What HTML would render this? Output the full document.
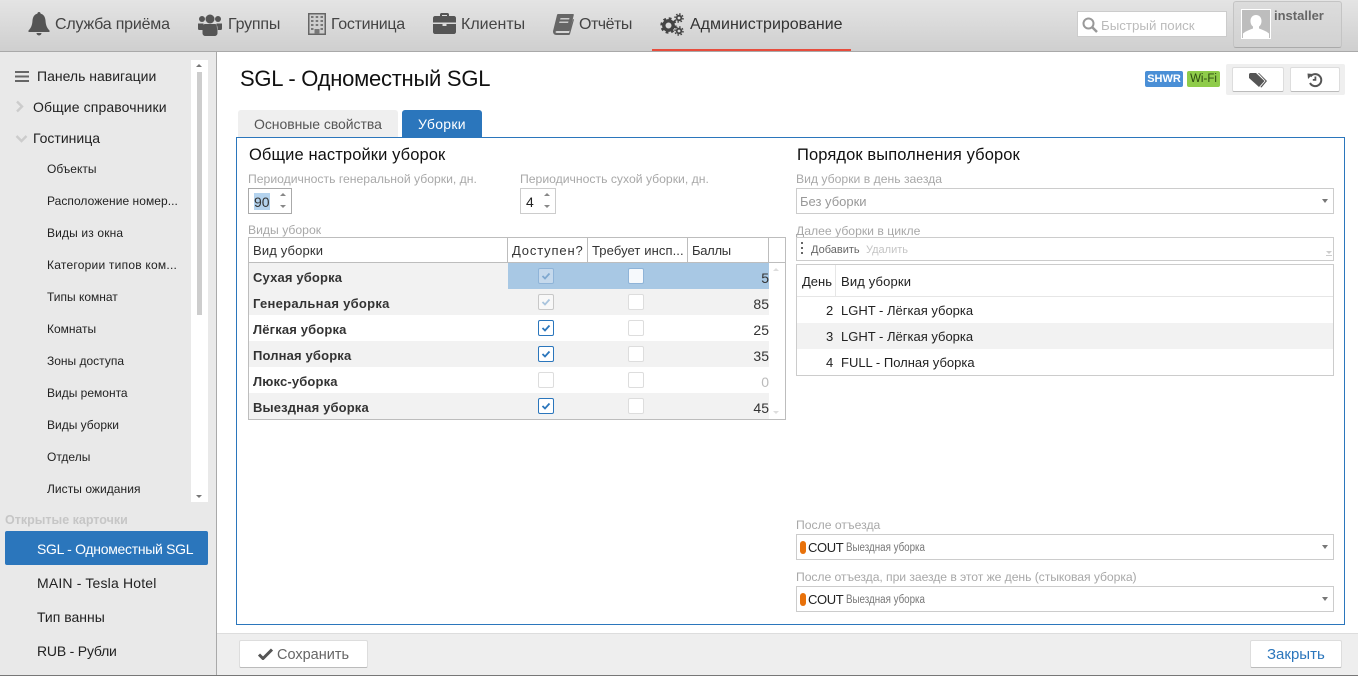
<!DOCTYPE html>
<html lang="ru"><head><meta charset="utf-8"><title>SGL</title>
<style>
*{box-sizing:border-box}
html,body{margin:0;padding:0;width:1358px;height:676px;overflow:hidden;background:#fff;font-family:"Liberation Sans","DejaVu Sans",sans-serif;color:#222}
.b{position:absolute}
.t{position:absolute;white-space:nowrap;line-height:20px;height:20px}
.n{font-size:16px;color:#444}
.s{font-size:14px;color:#222}
.m{font-size:12px;color:#222}
.l{font-size:12.200px;color:#a8a8a8}
.r{font-size:13px;font-weight:bold;color:#333;letter-spacing:.15px}
.num{font-size:14px;color:#333;text-align:right}
.sel{background:#fff;border:1px solid #ccc}
.arr{position:absolute;width:0;height:0;border-left:3.500px solid transparent;border-right:3.500px solid transparent;border-top:4px solid #777}
.up{position:absolute;width:0;height:0;border-left:3.500px solid transparent;border-right:3.500px solid transparent;border-bottom:3px solid #888}
.dn{position:absolute;width:0;height:0;border-left:3.500px solid transparent;border-right:3.500px solid transparent;border-top:3px solid #888}
.cb{position:absolute;width:16px;height:16px;background:#fff;border:1px solid #ddd;border-radius:2px}
.cb svg{position:absolute;left:2px;top:2px}
.btn{position:absolute;background:#fff;border:1px solid #ddd;border-bottom:1px solid #bbb;border-radius:2px}
svg{position:absolute;display:block}
.sub{font-size:11.500px;color:#777;transform:scaleX(.85);transform-origin:0 50%}
</style></head><body>

<!-- top bar -->
<div class="b" style="left:0;top:0;width:1358px;height:52px;background:linear-gradient(#e4e4e4,#cfcfcf);border-bottom:1px solid #a9a9a9"></div>
<div class="b" style="left:652px;top:49px;width:199px;height:2px;background:#e74c3c"></div>

<svg style="left:28px;top:12px" width="22" height="24" viewBox="0 0 22 24"><path fill="#555" d="M11 0c-1 0-1.600.7-1.600 1.600C6.300 2.400 4.800 5 4.500 8.500 4.200 12.500 3.500 15.500.5 18.500v1.500h21v-1.500c-3-3-3.700-6-4-10C17.200 5 15.700 2.400 12.600 1.600 12.600.7 12 0 11 0zM8.500 21a2.500 2.500 0 0 0 5 0z"/></svg>
<div class="t n" style="left:55px;top:15px;letter-spacing:-.2px">Служба приёма</div>

<svg style="left:198px;top:13px" width="24" height="23" viewBox="0 0 24 23"><g fill="#555"><circle cx="4" cy="6" r="3"/><circle cx="20" cy="6" r="3"/><circle cx="12" cy="6" r="4.500"/><path d="M0 10.500h5.500L4.800 17H1.500C0 17 0 16 0 15zM24 10.500h-5.500l.7 6.500h3.300c1.500 0 1.500-1 1.500-2zM7 11h10c1.500 0 2.500 1.500 2.500 4v5c0 2-1.500 3-3 3h-9c-1.500 0-3-1-3-3v-5c0-2.500 1-4 2.500-4z"/></g></svg>
<div class="t n" style="left:228px;top:15px;letter-spacing:-.2px">Группы</div>

<svg style="left:308px;top:13px" width="18" height="22" viewBox="0 0 18 22"><rect width="18" height="22" fill="#666"/><rect x="1.500" y="1.500" width="15" height="19" fill="#cfcfcf"/><g fill="#777"><rect x="3" y="3" width="2.500" height="2"/><rect x="7.700" y="3" width="2.500" height="2"/><rect x="12.500" y="3" width="2.500" height="2"/><rect x="3" y="7" width="2.500" height="2"/><rect x="7.700" y="7" width="2.500" height="2"/><rect x="12.500" y="7" width="2.500" height="2"/><rect x="3" y="11" width="2.500" height="2"/><rect x="7.700" y="11" width="2.500" height="2"/><rect x="12.500" y="11" width="2.500" height="2"/><rect x="3" y="15" width="2.500" height="2"/><rect x="12.500" y="15" width="2.500" height="2"/><rect x="6.500" y="16" width="5" height="5"/></g></svg>
<div class="t n" style="left:331px;top:15px;letter-spacing:-.3px">Гостиница</div>

<svg style="left:433px;top:13px" width="23" height="21" viewBox="0 0 23 21"><path fill="#555" d="M7 3V1.500C7 .7 7.700 0 8.500 0h6c.8 0 1.500.7 1.500 1.500V3h5c1.100 0 2 .9 2 2v4.500H0V5c0-1.100.9-2 2-2zm2 0h5V2H9zM0 11h9.500v2h4v-2H23v8c0 1.100-.9 2-2 2H2c-1.100 0-2-.9-2-2z"/></svg>
<div class="t n" style="left:461px;top:15px">Клиенты</div>

<svg style="left:553px;top:14px" width="21" height="21" viewBox="0 0 21 21"><path fill="#666" d="M5 0h15c.6 0 1 .4.800 1L17 16c-.3.800-.8 1-1.500 1H4c-1 0-1.500.5-1.500 1s.5 1 1.500 1h12l4-14 1 .5L17 20c-.2.600-.6 1-1.300 1H3.500C1 21 0 19.300 0 17.500c0-.6.100-1 .3-1.500L4 1C4.200.4 4.500 0 5 0z"/><path fill="#ccc" d="M7.500 4h9l-.4 1.500h-9zM6.500 7.500h9L15.100 9h-9z"/></svg>
<div class="t n" style="left:579px;top:15px;letter-spacing:-.5px">Отчёты</div>

<svg style="left:660px;top:13px" width="24" height="23" viewBox="0 0 24 23"><g fill="none" stroke="#444"><circle cx="8.500" cy="12.500" r="4.700" stroke-width="3.400"/><circle cx="8.500" cy="12.500" r="7" stroke-width="2.400" stroke-dasharray="2.750 2.750"/><circle cx="19" cy="5" r="2.300" stroke-width="1.800"/><circle cx="19" cy="5" r="4" stroke-width="1.500" stroke-dasharray="1.570 1.570"/><circle cx="19" cy="18" r="2.300" stroke-width="1.800"/><circle cx="19" cy="18" r="4" stroke-width="1.500" stroke-dasharray="1.570 1.570"/></g></svg>
<div class="t n" style="left:690px;top:15px;color:#333">Администрирование</div>

<!-- search -->
<div class="b" style="left:1077px;top:11px;width:150px;height:26px;background:#fff;border:1px solid #ccc"></div>
<svg style="left:1082px;top:17px" width="16" height="16" viewBox="0 0 16 16"><circle cx="6.500" cy="6.500" r="5" fill="none" stroke="#999" stroke-width="2"/><path d="M10 10l5 5" stroke="#999" stroke-width="2.500"/></svg>
<div class="t" style="left:1101px;top:16px;font-size:13.300px;color:#bbb">Быстрый поиск</div>

<!-- user -->
<div class="b" style="left:1233px;top:1px;width:109px;height:47px;background:linear-gradient(#dcdcdc,#d2d2d2);border:1px solid #c4c4c4;border-bottom:1px solid #aaa;border-radius:3px"></div>
<svg style="left:1241px;top:9px" width="30" height="30" viewBox="0 0 30 30"><rect width="30" height="30" fill="#fff"/><rect x="1" y="1" width="28" height="28" fill="#bdbdbd"/><path fill="#fff" d="M15 6c3.500 0 5.500 2.500 5.500 6 0 2.500-1 4.500-2.500 5.500v2c3 1 7 2.500 10 5v4.500H2v-4.500c3-2.500 7-4 10-5v-2C10.500 16.500 9.500 14.500 9.500 12c0-3.500 2-6 5.500-6z"/></svg>
<div class="t" style="left:1274px;top:6px;font-size:13px;font-weight:bold;color:#666">installer</div>

<!-- sidebar -->
<div class="b" style="left:0;top:52px;width:217px;height:623px;background:#e9e9e9;border-right:1px solid #a9a9a9"></div>
<div class="b" style="left:191px;top:60px;width:17px;height:442px;background:#fff"></div>
<div class="b" style="left:197px;top:72px;width:5px;height:243px;background:#cdcdcd"></div>
<div class="up" style="left:196px;top:64px;border-bottom-color:#777"></div>
<div class="dn" style="left:196px;top:495px;border-top-color:#777"></div>

<svg style="left:15px;top:71px" width="14" height="11" viewBox="0 0 14 11"><path fill="#666" d="M0 0h14v2H0zM0 4.500h14v2H0zM0 9h14v2H0z"/></svg>
<div class="t s" style="left:37px;top:66px">Панель навигации</div>
<svg style="left:15px;top:100px" width="9" height="13" viewBox="0 0 9 13"><path d="M2 1.500l5 5-5 5" fill="none" stroke="#ccc" stroke-width="2.400"/></svg>
<div class="t s" style="left:33px;top:97px;letter-spacing:.12px">Общие справочники</div>
<svg style="left:15px;top:134px" width="13" height="9" viewBox="0 0 13 9"><path d="M1.500 2l5 5 5-5" fill="none" stroke="#ccc" stroke-width="2.400"/></svg>
<div class="t s" style="left:33px;top:128px">Гостиница</div>
<div class="t m" style="left:47px;top:159px">Объекты</div>
<div class="t m" style="left:47px;top:191px;letter-spacing:.05px">Расположение номер...</div>
<div class="t m" style="left:47px;top:223px;letter-spacing:.15px">Виды из окна</div>
<div class="t m" style="left:47px;top:255px;letter-spacing:.23px">Категории типов ком...</div>
<div class="t m" style="left:47px;top:287px">Типы комнат</div>
<div class="t m" style="left:47px;top:319px">Комнаты</div>
<div class="t m" style="left:47px;top:351px">Зоны доступа</div>
<div class="t m" style="left:47px;top:383px">Виды ремонта</div>
<div class="t m" style="left:47px;top:415px">Виды уборки</div>
<div class="t m" style="left:47px;top:447px">Отделы</div>
<div class="t m" style="left:47px;top:479px;letter-spacing:.05px">Листы ожидания</div>

<div class="t" style="left:5px;top:510px;font-size:12.500px;font-weight:bold;color:#c6c6c6">Открытые карточки</div>
<div class="b" style="left:5px;top:531px;width:203px;height:34px;background:#2b76bc;border-radius:2px"></div>
<div class="t s" style="left:37px;top:539px;color:#fff;letter-spacing:-.3px">SGL - Одноместный SGL</div>
<div class="t s" style="left:37px;top:573px;letter-spacing:.17px">MAIN - Tesla Hotel</div>
<div class="t s" style="left:37px;top:607px">Тип ванны</div>
<div class="t s" style="left:37px;top:641px;letter-spacing:-.2px">RUB - Рубли</div>

<!-- header -->
<div class="t" style="left:240px;top:69px;font-size:22px;color:#111;letter-spacing:-.25px">SGL - Одноместный SGL</div>
<div class="b" style="left:1145px;top:71px;width:38px;height:16px;background:#4a8fd6;border-radius:2px;color:#fff;font-size:11px;line-height:16px;text-align:center;font-weight:bold">SHWR</div>
<div class="b" style="left:1187px;top:71px;width:33px;height:16px;background:#8fcc4a;border-radius:2px;color:#2c4a10;font-size:11.500px;line-height:16px;text-align:center">Wi-Fi</div>
<div class="b" style="left:1226px;top:64px;width:119px;height:31px;background:#efefef;border-radius:2px"></div>
<div class="btn" style="left:1232px;top:67px;width:52px;height:25px"></div>
<div class="btn" style="left:1290px;top:67px;width:50px;height:25px"></div>
<svg style="left:1249px;top:73px" width="18" height="15" viewBox="0 0 18 15"><path fill="#555" d="M0 1.500C0 .7.700 0 1.500 0H7l8.500 8L10 14 0 5z"/><path fill="#555" d="M9 0h1l8 8-5.500 6.500-1.200-.5L16.500 8z"/></svg>
<svg style="left:1307px;top:72px" width="16" height="16" viewBox="0 0 16 16"><path d="M3.500 4.500A6 6 0 1 1 3 11" fill="none" stroke="#555" stroke-width="2"/><path fill="#555" d="M.5 1.500l5.500.5L1 7zM7.500 4.500h1.800v4.200h-3.500V7h1.700z"/></svg>

<!-- tabs -->
<div class="b" style="left:238px;top:110px;width:160px;height:27px;background:#efefef;border-radius:3px 3px 0 0"></div>
<div class="t s" style="left:254px;top:114px;color:#555;letter-spacing:-.05px">Основные свойства</div>
<div class="b" style="left:402px;top:110px;width:80px;height:28px;background:#2b76bc;border-radius:3px 3px 0 0"></div>
<div class="t s" style="left:418px;top:114px;color:#fff;letter-spacing:.3px">Уборки</div>

<!-- panel -->
<div class="b" style="left:236px;top:137px;width:1109px;height:488px;border:1px solid #2b76bc"></div>

<div class="t" style="left:249px;top:145px;font-size:16.500px;color:#111;letter-spacing:.1px">Общие настройки уборок</div>
<div class="t l" style="left:248px;top:169px">Периодичность генеральной уборки, дн.</div>
<div class="b" style="left:248px;top:188px;width:44px;height:26px;background:#fff;border:1px solid #aaa"></div>
<div class="b" style="left:254px;top:193px;width:16px;height:17px;background:#b4d3ee"></div>
<div class="t s" style="left:254px;top:192px;color:#333">90</div>
<div class="up" style="left:280px;top:193px"></div><div class="dn" style="left:280px;top:205px"></div>

<div class="t l" style="left:520px;top:169px">Периодичность сухой уборки, дн.</div>
<div class="b" style="left:520px;top:188px;width:36px;height:26px;background:#fff;border:1px solid #ccc"></div>
<div class="t s" style="left:526px;top:192px;color:#222">4</div>
<div class="up" style="left:544px;top:193px"></div><div class="dn" style="left:544px;top:205px"></div>

<div class="t l" style="left:248px;top:220px">Виды уборок</div>

<!-- left table -->
<div class="b" style="left:248px;top:237px;width:538px;height:183px;background:#fff;border:1px solid #bdbdbd"></div>
<div class="b" style="left:249px;top:262px;width:536px;height:1px;background:#bdbdbd"></div>
<div class="b" style="left:507px;top:238px;width:1px;height:24px;background:#bdbdbd"></div>
<div class="b" style="left:587px;top:238px;width:1px;height:24px;background:#bdbdbd"></div>
<div class="b" style="left:687px;top:238px;width:1px;height:24px;background:#bdbdbd"></div>
<div class="b" style="left:768px;top:238px;width:1px;height:24px;background:#bdbdbd"></div>
<div class="t m" style="left:253px;top:241px;font-size:13px;color:#333;letter-spacing:.15px">Вид уборки</div>
<div class="t m" style="left:512px;top:241px;font-size:13px;color:#333;letter-spacing:.85px">Доступен?</div>
<div class="t m" style="left:592px;top:241px;font-size:13px;color:#333;letter-spacing:.1px">Требует инсп...</div>
<div class="t m" style="left:692px;top:241px;font-size:13px;color:#333;letter-spacing:-.3px">Баллы</div>

<div class="b" style="left:249px;top:263px;width:259px;height:52px;background:#f2f2f2"></div>
<div class="b" style="left:508px;top:263px;width:261px;height:26px;background:#a8c8e4"></div>
<div class="b" style="left:508px;top:289px;width:261px;height:26px;background:#f2f2f2"></div>
<div class="b" style="left:249px;top:341px;width:520px;height:26px;background:#f2f2f2"></div>
<div class="b" style="left:249px;top:393px;width:520px;height:26px;background:#f2f2f2"></div>

<div class="t r" style="left:253px;top:268px">Сухая уборка</div>
<div class="t r" style="left:253px;top:294px;letter-spacing:.28px">Генеральная уборка</div>
<div class="t r" style="left:253px;top:320px">Лёгкая уборка</div>
<div class="t r" style="left:253px;top:346px">Полная уборка</div>
<div class="t r" style="left:253px;top:372px">Люкс-уборка</div>
<div class="t r" style="left:253px;top:398px">Выездная уборка</div>

<div class="cb" style="left:538px;top:268px;background:#c5d9ec;border-color:#8fb4d8"><svg width="10" height="10" viewBox="0 0 10 10"><path d="M1.500 5l2.500 2.500 4.500-5" fill="none" stroke="#7fa8cf" stroke-width="1.800"/></svg></div>
<div class="cb" style="left:538px;top:294px;border-color:#c8c8c8;background:#f8f8f8"><svg width="10" height="10" viewBox="0 0 10 10"><path d="M1.500 5l2.500 2.500 4.500-5" fill="none" stroke="#a9c4dd" stroke-width="1.800"/></svg></div>
<div class="cb" style="left:538px;top:320px;border-color:#2b76bc"><svg width="10" height="10" viewBox="0 0 10 10"><path d="M1.500 5l2.500 2.500 4.500-5" fill="none" stroke="#2b76bc" stroke-width="1.800"/></svg></div>
<div class="cb" style="left:538px;top:346px;border-color:#2b76bc"><svg width="10" height="10" viewBox="0 0 10 10"><path d="M1.500 5l2.500 2.500 4.500-5" fill="none" stroke="#2b76bc" stroke-width="1.800"/></svg></div>
<div class="cb" style="left:538px;top:372px"></div>
<div class="cb" style="left:538px;top:398px;border-color:#2b76bc"><svg width="10" height="10" viewBox="0 0 10 10"><path d="M1.500 5l2.500 2.500 4.500-5" fill="none" stroke="#2b76bc" stroke-width="1.800"/></svg></div>

<div class="cb" style="left:628px;top:268px;background:#f6f9fc;border-color:#8fb4d8"></div>
<div class="cb" style="left:628px;top:294px"></div>
<div class="cb" style="left:628px;top:320px"></div>
<div class="cb" style="left:628px;top:346px"></div>
<div class="cb" style="left:628px;top:372px"></div>
<div class="cb" style="left:628px;top:398px"></div>

<div class="t num" style="left:729px;width:40px;top:268px">5</div>
<div class="t num" style="left:729px;width:40px;top:294px">85</div>
<div class="t num" style="left:729px;width:40px;top:320px">25</div>
<div class="t num" style="left:729px;width:40px;top:346px">35</div>
<div class="t num" style="left:729px;width:40px;top:372px;color:#bbb">0</div>
<div class="t num" style="left:729px;width:40px;top:398px">45</div>
<div class="up" style="left:773px;top:268px;border-bottom-color:#ddd"></div>
<div class="dn" style="left:773px;top:411px;border-top-color:#ddd"></div>

<!-- right column -->
<div class="t" style="left:797px;top:145px;font-size:16.500px;color:#111;letter-spacing:.1px">Порядок выполнения уборок</div>
<div class="t l" style="left:796px;top:169px">Вид уборки в день заезда</div>
<div class="sel b" style="left:796px;top:188px;width:538px;height:26px"></div>
<div class="t" style="left:800px;top:192px;font-size:13px;color:#999">Без уборки</div>
<div class="arr" style="left:1322px;top:199px"></div>

<div class="t l" style="left:796px;top:221px">Далее уборки в цикле</div>
<div class="sel b" style="left:796px;top:237px;width:538px;height:24px"></div>
<svg style="left:800px;top:242px" width="4" height="15" viewBox="0 0 4 15"><g fill="#666"><rect x="1" y="0" width="2" height="2"/><rect x="1" y="5" width="2" height="2"/><rect x="1" y="10" width="2" height="2"/></g></svg>
<div class="t" style="left:811px;top:240px;font-size:11px;color:#666">Добавить</div>
<div class="t" style="left:866px;top:240px;font-size:11px;color:#c4c4c4">Удалить</div>
<div class="dn" style="left:1326px;top:251px;border-top-color:#ccc"></div>
<div class="b" style="left:1326px;top:255px;width:6px;height:1px;background:#ccc"></div>

<div class="sel b" style="left:796px;top:264px;width:538px;height:112px"></div>
<div class="b" style="left:797px;top:296px;width:536px;height:1px;background:#e6e6e6"></div>
<div class="b" style="left:835px;top:265px;width:1px;height:31px;background:#e6e6e6"></div>
<div class="b" style="left:797px;top:323px;width:536px;height:26px;background:#f2f2f2"></div>
<div class="t m" style="left:802px;top:272px;font-size:13px">День</div>
<div class="t m" style="left:841px;top:272px;font-size:13px;letter-spacing:.15px">Вид уборки</div>
<div class="t m" style="left:826px;top:301px;font-size:13px">2</div>
<div class="t m" style="left:841px;top:301px;font-size:13px">LGHT - Лёгкая уборка</div>
<div class="t m" style="left:826px;top:327px;font-size:13px">3</div>
<div class="t m" style="left:841px;top:327px;font-size:13px">LGHT - Лёгкая уборка</div>
<div class="t m" style="left:826px;top:353px;font-size:13px">4</div>
<div class="t m" style="left:841px;top:353px;font-size:13px">FULL - Полная уборка</div>

<div class="t l" style="left:796px;top:515px">После отъезда</div>
<div class="sel b" style="left:796px;top:534px;width:538px;height:26px"></div>
<div class="b" style="left:800px;top:541px;width:6px;height:13px;background:#e8710a;border-radius:3px"></div>
<div class="t" style="left:808px;top:538px;font-size:13px;color:#222;letter-spacing:-.4px">COUT</div>
<div class="t sub" style="left:846px;top:538px">Выездная уборка</div>
<div class="arr" style="left:1322px;top:545px"></div>

<div class="t l" style="left:796px;top:567px;letter-spacing:-.07px">После отъезда, при заезде в этот же день (стыковая уборка)</div>
<div class="sel b" style="left:796px;top:586px;width:538px;height:26px"></div>
<div class="b" style="left:800px;top:593px;width:6px;height:13px;background:#e8710a;border-radius:3px"></div>
<div class="t" style="left:808px;top:590px;font-size:13px;color:#222;letter-spacing:-.4px">COUT</div>
<div class="t sub" style="left:846px;top:590px">Выездная уборка</div>
<div class="arr" style="left:1322px;top:597px"></div>

<!-- footer -->
<div class="b" style="left:217px;top:633px;width:1141px;height:42px;background:#eee;border-top:1px solid #ddd"></div>
<div class="btn" style="left:239px;top:640px;width:129px;height:28px"></div>
<svg style="left:258px;top:648px" width="15" height="12" viewBox="0 0 15 12"><path d="M1 6.500l4 4 9-9" fill="none" stroke="#555" stroke-width="3"/></svg>
<div class="t" style="left:277px;top:645px;font-size:14.500px;color:#666">Сохранить</div>
<div class="btn" style="left:1250px;top:640px;width:92px;height:28px"></div>
<div class="t" style="left:1267px;top:645px;font-size:15px;color:#2b76bc">Закрыть</div>

<div class="b" style="left:0;top:675px;width:1358px;height:1px;background:#777"></div>
</body></html>
